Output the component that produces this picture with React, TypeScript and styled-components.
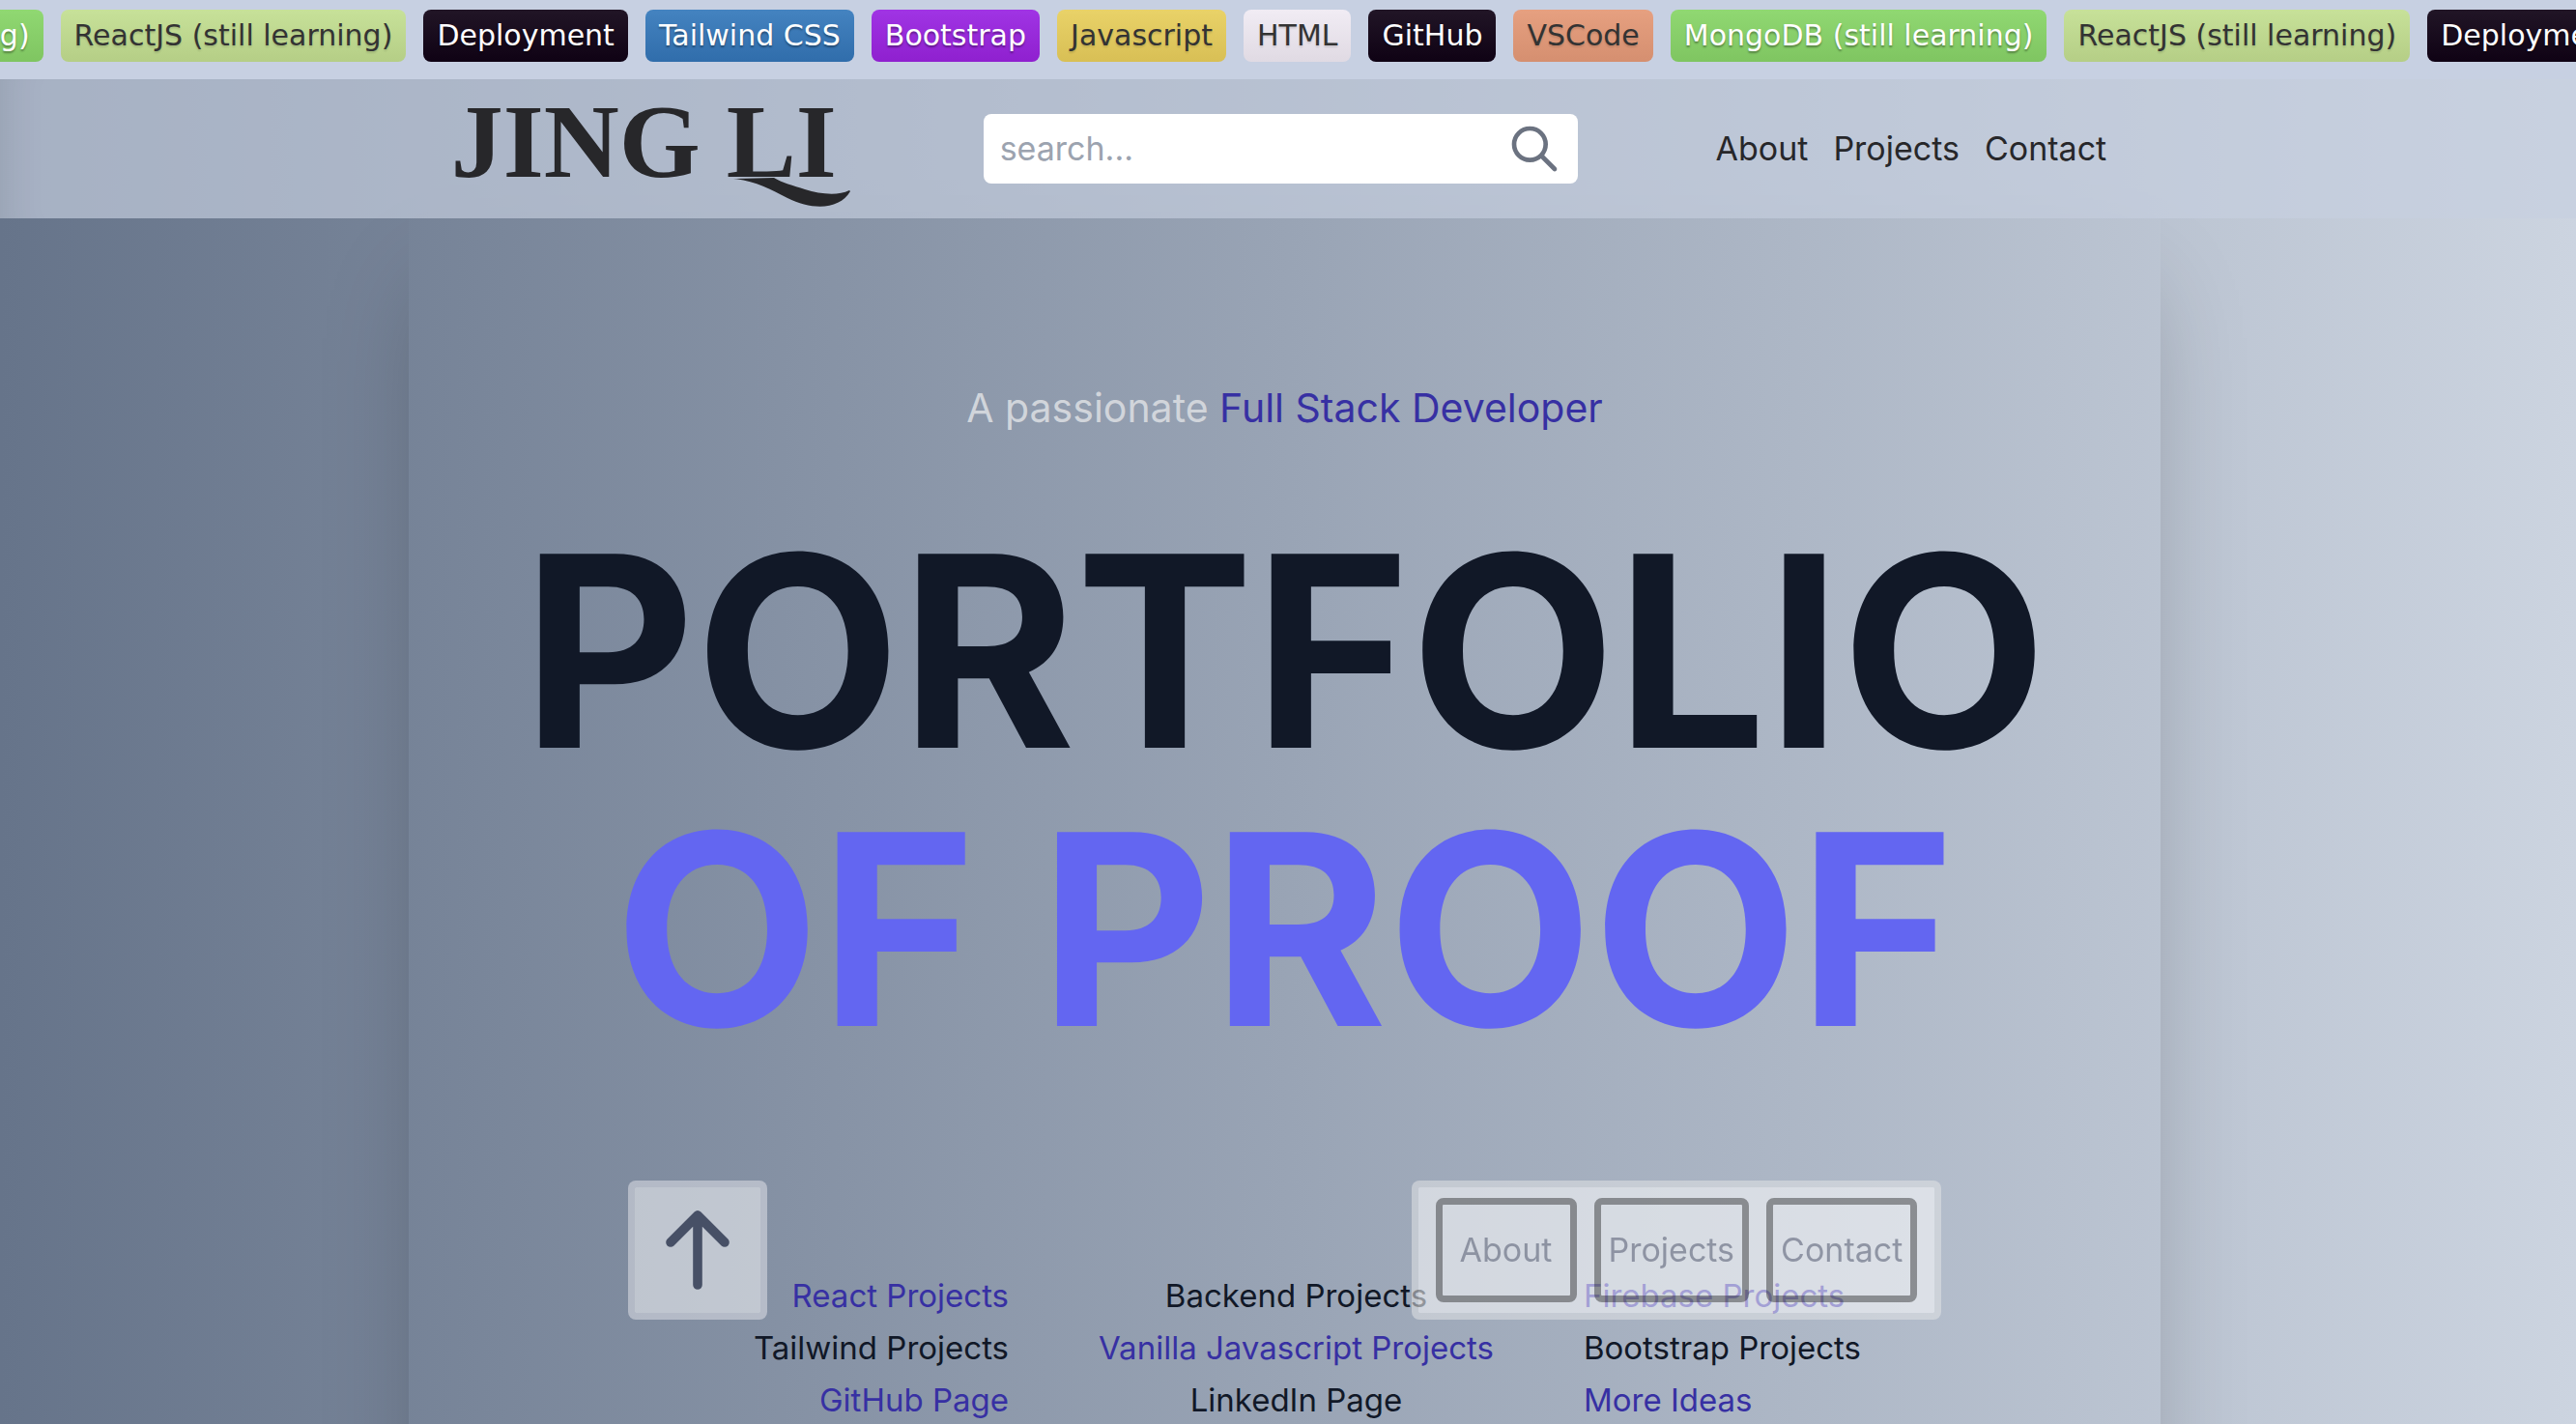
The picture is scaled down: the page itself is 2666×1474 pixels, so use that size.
import React from "react";
import styled, { createGlobalStyle } from "styled-components";

const GlobalStyle = createGlobalStyle`
  *, *::before, *::after { box-sizing: border-box; }
  html { height: 100%; }
  body {
    margin: 0;
    min-height: 100%;
    background: linear-gradient(to right, #66748a, #ccd4e0) fixed;
    font-family: Inter, "Liberation Sans", sans-serif;
    font-size: 34px;
    line-height: 54px;
    color: #111827;
    overflow: hidden;
  }
  a { color: inherit; text-decoration: none; }
  ul { list-style: none; margin: 0; padding: 0; }
`;

const Page = styled.div`
  height: 100vh;
  overflow: hidden;
  display: flex;
  flex-direction: column;
`;

const Marquee = styled.div`
  flex: none;
  position: relative;
  z-index: 1;
  overflow: hidden;
  padding: 10px 0 18px;
  background: #c7d0e2;
`;

const Track = styled.ul`
  display: flex;
  gap: 18px;
  width: max-content;
  margin-left: -345px;
`;

const Tag = styled.li<{ $from: string; $to: string; $light?: boolean }>`
  padding: 0 14px;
  border-radius: 8px;
  background: linear-gradient(${(p) => p.$from}, ${(p) => p.$to});
  color: ${(p) => (p.$light ? "#ffffff" : "#333333")};
  text-shadow: 0 2px 2px ${(p) => (p.$light ? "rgba(0,0,0,.35)" : "rgba(0,0,0,.12)")};
  font-family: "DejaVu Sans", sans-serif;
  font-size: 30px;
  line-height: 54px;
  white-space: nowrap;
`;

const Header = styled.header`
  flex: none;
  position: relative;
  z-index: 1;
  padding-right: 7px;
  background: rgba(199, 208, 224, 0.67);
  box-shadow: inset 48px 0 48px -48px rgba(0, 0, 0, 0.12);
`;

const HeaderInner = styled.div`
  width: 68.2%;
  height: 144px;
  margin: 0 auto;
  padding: 0 56px 0 44px;
  display: flex;
  align-items: center;
  justify-content: space-between;
  color: #27272a;
`;

const Logo = styled.a`
  position: relative;
  width: 408px;
  padding-bottom: 14px;
  font-family: "Liberation Serif", serif;
  font-weight: 700;
  font-size: 108px;
  line-height: 136px;
  white-space: nowrap;
`;

const Swash = styled.svg`
  position: absolute;
  right: -6px;
  bottom: 14px;
  width: 124px;
  height: 32px;
`;

const SearchForm = styled.form`
  width: 615px;
  height: 72px;
  padding: 0 17px;
  display: flex;
  align-items: center;
  background: #ffffff;
  border-radius: 8px;
`;

const SearchInput = styled.input`
  flex: 1;
  min-width: 0;
  border: 0;
  padding: 0;
  outline: none;
  background: transparent;
  font: inherit;
  color: #27272a;
  &::placeholder { color: #9ca3af; opacity: 1; }
`;

const IconButton = styled.button`
  display: flex;
  padding: 0;
  border: 0;
  background: none;
  color: #6b7280;
`;

const NavLinks = styled.nav`
  display: flex;
  gap: 26px;
`;

const Main = styled.main`
  flex: 1;
  padding-right: 7px;
`;

const Card = styled.section`
  width: 68.2%;
  height: 200vh;
  margin: 0 auto;
  padding-top: 160px;
  box-shadow: 0 50px 100px -24px rgba(0, 0, 0, 0.25);
  text-align: center;
`;

const Tagline = styled.p`
  margin: 0;
  font-size: 41px;
  line-height: 72px;
  color: #d1d5db;
`;

const Accent = styled.span`
  color: #3730a3;
`;

const Title = styled.h1`
  margin: 72px 0 0;
  font-size: 276px;
  line-height: 288px;
  font-weight: 700;
  white-space: nowrap;
`;

const TitleAccent = styled.span`
  display: block;
  color: #6366f1;
`;

const Links = styled.div`
  display: grid;
  grid-template-columns: 1fr auto 1fr;
  column-gap: 93px;
  margin-top: 208px;
  padding-left: 24px;
  font-size: 33px;
`;

const LinkColumn = styled.ul<{ $align: string }>`
  text-align: ${(p) => p.$align};
`;

const ProjectLink = styled.a<{ $accent: boolean }>`
  && { color: ${(p) => (p.$accent ? "#3730a3" : "#111827")}; }
`;

const Dock = styled.div`
  position: fixed;
  z-index: 2;
  left: 0;
  right: 7px;
  bottom: 108px;
  width: 51%;
  margin: 0 auto;
  display: flex;
  justify-content: space-between;
`;

const ToTop = styled.button`
  width: 144px;
  height: 144px;
  padding: 0;
  display: grid;
  place-items: center;
  border: 7px solid rgba(232, 232, 238, 0.5);
  border-radius: 8px;
  background: rgba(255, 255, 255, 0.5) padding-box;
  color: #475066;
`;

const DockNav = styled.nav`
  height: 144px;
  padding: 11px 18px;
  display: flex;
  gap: 18px;
  border: 7px solid rgba(225, 227, 230, 0.55);
  border-radius: 8px;
  background: rgba(255, 255, 255, 0.54) padding-box;
`;

const DockButton = styled.button`
  min-width: 146px;
  padding: 0 8px;
  border: 7px solid rgba(0, 0, 0, 0.37);
  border-radius: 8px;
  background: none;
  font: inherit;
  color: rgba(107, 114, 132, 0.68);
`;

type TagData = { name: string; from: string; to: string; light?: boolean };

const mongo: TagData = { name: "MongoDB (still learning)", from: "#90d872", to: "#7fc561", light: true };
const react: TagData = { name: "ReactJS (still learning)", from: "#c7e199", to: "#b5ce86" };
const deploy: TagData = { name: "Deployment", from: "#211526", to: "#0f0214", light: true };

const tags: TagData[] = [
  mongo,
  react,
  deploy,
  { name: "Tailwind CSS", from: "#4483c0", to: "#306dab", light: true },
  { name: "Bootstrap", from: "#a034e4", to: "#8f20cf", light: true },
  { name: "Javascript", from: "#e9d268", to: "#d8bf55" },
  { name: "HTML", from: "#f1ecf4", to: "#e0dae3" },
  { name: "GitHub", from: "#211526", to: "#0f0214", light: true },
  { name: "VSCode", from: "#e6a080", to: "#d58f70" },
  mongo,
  react,
  deploy,
];

const sections = ["About", "Projects", "Contact"];

const columns = [
  { align: "right", items: ["React Projects", "Tailwind Projects", "GitHub Page"] },
  { align: "center", items: ["Backend Projects", "Vanilla Javascript Projects", "LinkedIn Page"] },
  { align: "left", items: ["Firebase Projects", "Bootstrap Projects", "More Ideas"] },
];

export default function App() {
  return (
    <Page>
      <GlobalStyle />
      <Marquee>
        <Track>
          {tags.map((t, i) => (
            <Tag key={i} $from={t.from} $to={t.to} $light={t.light}>
              {t.name}
            </Tag>
          ))}
        </Track>
      </Marquee>
      <Header>
        <HeaderInner>
          <Logo href="#">
            JING LI
            <Swash viewBox="0 0 124 32" fill="currentColor" aria-hidden="true">
              <path d="M2 2C24 4 40 13 58 22C84 35 112 34 123 15L122 14C110 20 92 18 76 13C64 9 52 6 44 1Z" />
            </Swash>
          </Logo>
          <SearchForm role="search" onSubmit={(e) => e.preventDefault()}>
            <SearchInput type="text" placeholder="search..." aria-label="Search" />
            <IconButton type="submit" aria-label="Submit search">
              <svg width="56" height="56" viewBox="0 0 24 24" fill="none" stroke="currentColor" strokeWidth="2" strokeLinecap="round" strokeLinejoin="round">
                <path d="M21 21l-6-6m2-5a7 7 0 11-14 0 7 7 0 0114 0z" />
              </svg>
            </IconButton>
          </SearchForm>
          <NavLinks>
            {sections.map((s) => (
              <a key={s} href={"#" + s.toLowerCase()}>{s}</a>
            ))}
          </NavLinks>
        </HeaderInner>
      </Header>
      <Main>
        <Card>
          <Tagline>
            A passionate <Accent>Full Stack Developer</Accent>
          </Tagline>
          <Title>
            PORTFOLIO
            <TitleAccent>OF PROOF</TitleAccent>
          </Title>
          <Links>
            {columns.map((c, ci) => (
              <LinkColumn key={c.align} $align={c.align}>
                {c.items.map((name, ri) => (
                  <li key={name}>
                    <ProjectLink href="#projects" $accent={(ci + ri) % 2 === 0}>{name}</ProjectLink>
                  </li>
                ))}
              </LinkColumn>
            ))}
          </Links>
        </Card>
      </Main>
      <Dock>
        <ToTop type="button" aria-label="Back to top">
          <svg width="96" height="96" viewBox="0 0 24 24" fill="none" stroke="currentColor" strokeWidth="2.4" strokeLinecap="round" strokeLinejoin="round">
            <path d="M5 10l7-7m0 0l7 7m-7-7v18" />
          </svg>
        </ToTop>
        <DockNav aria-label="Sections">
          {sections.map((s) => (
            <DockButton key={s} type="button">{s}</DockButton>
          ))}
        </DockNav>
      </Dock>
    </Page>
  );
}
